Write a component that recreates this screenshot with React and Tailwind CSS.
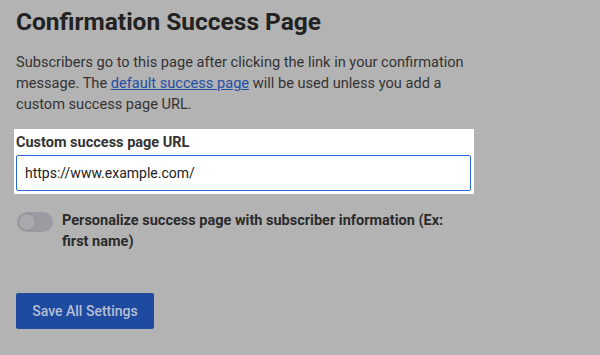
export default function App() {
  return (
    <div className="w-[600px] h-[355px] overflow-hidden bg-[#b3b3b3] font-['Roboto',sans-serif]">
      <div className="pl-4 pt-[6px]">
        <h1 className="text-[24.5px] leading-[32px] font-bold text-[#222222]">Confirmation Success Page</h1>
        <p className="mt-[14px] w-[470px] text-[14.6px] leading-[21px] text-[#333333]">
          Subscribers go to this page after clicking the link in your confirmation message. The{' '}
          <a className="text-[#1f4ea6] underline">default success page</a> will be used unless you add a custom
          success page URL.
        </p>
        <div className="-ml-[2px] mt-[14px] w-[460px] bg-white pl-[2px] pr-[3px] pt-[4px] pb-[3px]">
          <label className="block text-[14.5px] leading-[20px] font-bold text-[#333333]">Custom success page URL</label>
          <div className="mt-[2px] h-[36px] w-[455px] rounded-[2px] border border-[#2a6ad8] bg-white pl-[8px] flex items-center text-[14px] text-[#222222]">
            https://www.example.com/
          </div>
        </div>
        <div className="mt-[16px] flex gap-[9px]">
          <div className="mt-[2px] ml-[1px] h-[20px] w-[36px] shrink-0 rounded-full bg-[#9b9ca2] p-[1px]">
            <div className="h-[18px] w-[18px] rounded-full border border-[#8f9095] bg-[#a8a9ad]"></div>
          </div>
          <p className="w-[395px] text-[14.5px] leading-[21px] font-bold text-[#2b2b2b]">
            Personalize success page with subscriber information (Ex: first name)
          </p>
        </div>
        <button className="mt-[41px] h-[36px] w-[138px] rounded-[2px] bg-[#1e4aa0] text-[14px] text-[#b6bfd3] font-medium">
          Save All Settings
        </button>
      </div>
    </div>
  );
}
